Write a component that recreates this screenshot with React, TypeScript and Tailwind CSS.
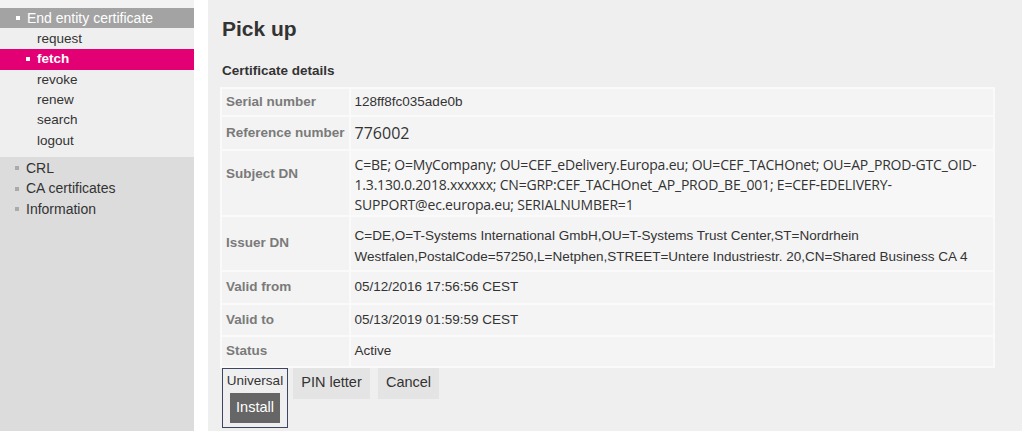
const subMenu = ['request', 'fetch', 'revoke', 'renew', 'search', 'logout'];
const otherMenu = ['CRL', 'CA certificates', 'Information'];

function Row({ label, children, h, calibri }: { label: string; children: React.ReactNode; h: string; calibri?: boolean }) {
  return (
    <tr className={h}>
      <td
        className={`w-[125px] whitespace-nowrap border-2 border-[#fafafa] bg-[#f3f3f3] px-[4px] font-bold text-[#7a7a7a] ${
          calibri ? 'pt-[13px] align-top' : 'align-middle'
        }`}
      >
        {label}
      </td>
      <td
        className={`border-2 border-[#fafafa] px-[4px] text-[#333] ${
          calibri ? "bg-[#f7f7f7] pt-[4px] align-top font-['Open_Sans',sans-serif] text-[14px] tracking-[-0.2px]" : 'bg-[#f4f4f4] align-middle'
        }`}
      >
        {children}
      </td>
    </tr>
  );
}

export default function App() {
  return (
    <div className="flex h-[431px] w-[1024px] bg-white font-['Liberation_Sans',Arial,sans-serif] text-[13.5px]">
      <aside className="flex w-[194px] flex-col bg-[#dcdcdc]">
        <div className="h-[8px] bg-[#f2f2f2]" />
        <div className="flex h-[20px] items-center gap-[7px] bg-[#a3a3a3] pl-[16px] text-[14px] text-white">
          <span className="h-[4px] w-[4px] bg-white" />
          End entity certificate
        </div>
        <ul className="bg-[#efefef] pb-[6px] pt-[1px]">
          {subMenu.map((item) =>
            item === 'fetch' ? (
              <li key={item} className="flex h-[20.3px] items-center gap-[7px] bg-[#e20074] pl-[26px] font-bold text-white">
                <span className="h-[4px] w-[4px] bg-white" />
                {item}
              </li>
            ) : (
              <li key={item} className="flex h-[20.3px] items-center pl-[37px] text-[#333]">
                {item}
              </li>
            )
          )}
        </ul>
        <ul className="pt-[1px]">
          {otherMenu.map((item) => (
            <li key={item} className="flex h-[20.5px] items-center gap-[7px] pl-[15px] text-[14px] text-[#333]">
              <span className="h-[4px] w-[4px] bg-[#aaa]" />
              {item}
            </li>
          ))}
        </ul>
      </aside>

      <main className="ml-[14px] mr-[2px] flex-1 bg-[#efefef] pl-[14px] pr-[25px]">
        <h1 className="mt-[13px] text-[21px] font-bold text-[#333]">Pick up</h1>
        <h2 className="mt-[16px] text-[13.5px] font-bold text-[#333]">Certificate details</h2>
        <table className="mt-[6px] w-full border-collapse -ml-[2px]">
          <tbody>
            <Row label="Serial number" h="h-[28px]">
              128ff8fc035ade0b
            </Row>
            <Row label="Reference number" h="h-[34px]">
              <span className="font-['Open_Sans',sans-serif] text-[16px]">776002</span>
            </Row>
            <Row label="Subject DN" h="h-[65px]" calibri>
              <div className="leading-[20px]">
                C=BE; O=MyCompany; OU=CEF_eDelivery.Europa.eu; OU=CEF_TACHOnet; OU=AP_PROD-GTC_OID-
                <br />
                1.3.130.0.2018.xxxxxx; CN=GRP:CEF_TACHOnet_AP_PROD_BE_001; E=CEF-EDELIVERY-
                <br />
                SUPPORT@ec.europa.eu; SERIALNUMBER=1
              </div>
            </Row>
            <Row label="Issuer DN" h="h-[55px]">
              <div className="pt-[6px] leading-[21px]">
                C=DE,O=T-Systems International GmbH,OU=T-Systems Trust Center,ST=Nordrhein
                <br />
                Westfalen,PostalCode=57250,L=Netphen,STREET=Untere Industriestr. 20,CN=Shared Business CA 4
              </div>
            </Row>
            <Row label="Valid from" h="h-[33px]">05/12/2016 17:56:56 CEST</Row>
            <Row label="Valid to" h="h-[32px]">05/13/2019 01:59:59 CEST</Row>
            <Row label="Status" h="h-[31px]">Active</Row>
          </tbody>
        </table>
        <div className="flex items-start text-[14.5px]">
          <div className="flex w-[66px] flex-col items-center border border-[#3d4560] pb-[4px] pt-[2px]">
            <span className="text-[13.5px] text-[#333]">Universal</span>
            <button className="mt-[2px] h-[30px] w-[50px] bg-[#666] text-white">Install</button>
          </div>
          <button className="ml-[5px] h-[31px] w-[77px] bg-[#e4e4e4] text-[#333]">PIN letter</button>
          <button className="ml-[8px] h-[31px] w-[61px] bg-[#e4e4e4] text-[#333]">Cancel</button>
        </div>
      </main>
    </div>
  );
}
